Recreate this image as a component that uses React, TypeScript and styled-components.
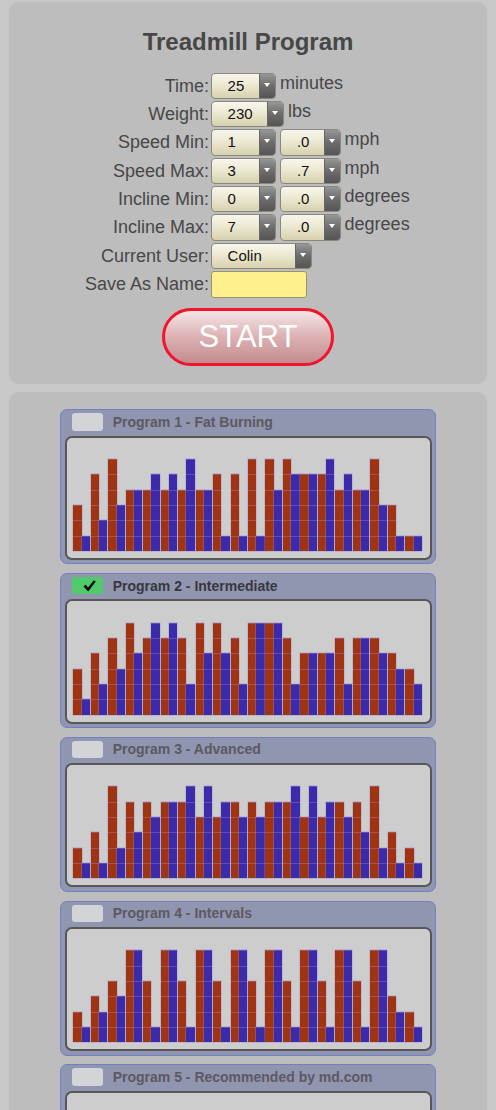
import React from 'react';
import styled, { createGlobalStyle } from 'styled-components';

const GlobalStyle = createGlobalStyle`
  html, body {
    margin: 0;
    padding: 0;
    background: #c8c8c8;
  }
  body {
    font-family: "Liberation Sans", Arial, Helvetica, sans-serif;
  }
`;

const Page = styled.div`
  display: flex;
  flex-direction: column;
  gap: 8px;
  padding: 2px 9px 0;
`;

const Panel = styled.section`
  background: #bdbdbd;
  border-radius: 10px;
`;

const SetupPanel = styled(Panel)`
  display: flex;
  flex-direction: column;
  padding: 26px 0 18.3px;
`;

const Title = styled.h1`
  margin: 0;
  font-size: 24px;
  line-height: 28px;
  font-weight: bold;
  color: #474747;
  text-align: center;
`;

const Form = styled.div`
  display: grid;
  grid-template-columns: 200px 1fr;
  grid-auto-rows: 26.33px;
  column-gap: 1.6px;
  row-gap: 2px;
  margin-top: 16.6px;
`;

const Label = styled.label`
  font-size: 18px;
  line-height: 26.33px;
  color: #474747;
  text-align: right;
  white-space: nowrap;
`;

const Controls = styled.div`
  display: flex;
  align-items: flex-start;
  gap: 4px;
`;

const Unit = styled.span`
  font-size: 18px;
  line-height: 20px;
  color: #474747;
`;

const SelectBox = styled.div<{ $w: number }>`
  width: ${(p) => p.$w}px;
  height: 26.33px;
  box-sizing: border-box;
  display: flex;
  border: 1px solid #8a887c;
  border-radius: 4px;
  overflow: hidden;
  background: linear-gradient(#f8f6ec, #ebe7cf 50%, #d6d1ae);
`;

const SelectValue = styled.span`
  flex: 1;
  padding-left: 16px;
  font-size: 15px;
  line-height: 24.33px;
  color: #111;
`;

const SelectArrow = styled.span`
  width: 16px;
  box-sizing: border-box;
  display: flex;
  justify-content: center;
  padding-top: 9px;
  border-left: 1px solid #666;
  background: linear-gradient(#969696, #6c6c6c 50%, #555);

  &::after {
    content: '';
    width: 0;
    height: 0;
    border-left: 3px solid transparent;
    border-right: 3px solid transparent;
    border-top: 4px solid #fff;
  }
`;

const TextInput = styled.input`
  width: 96px;
  height: 27px;
  box-sizing: border-box;
  padding: 0 4px;
  border: 1px solid #9a9468;
  border-radius: 3px;
  background: #fff08e;
  font: 15px "Liberation Sans", Arial, sans-serif;
  outline: none;
`;

const StartButton = styled.button`
  align-self: center;
  width: 172.6px;
  height: 57.4px;
  margin-top: 11px;
  padding: 0;
  box-sizing: border-box;
  border: 3px solid #f2132c;
  border-radius: 29px;
  background: linear-gradient(#f4e6e7, #dcb1b3 50%, #c38c8e);
  color: #fff;
  font: 31px "Liberation Sans", Arial, sans-serif;
  cursor: pointer;
`;

const ProgramsPanel = styled(Panel)`
  display: flex;
  flex-direction: column;
  align-items: center;
  gap: 8.6px;
  padding: 17.3px 0 20px;
`;

const Card = styled.div`
  width: 376px;
  box-sizing: border-box;
  padding: 0 3.5px 3.5px;
  border: 1px solid #6f80c6;
  border-radius: 7px;
  background: #9095b0;
`;

const CardHeader = styled.div`
  display: flex;
  align-items: center;
  gap: 10px;
  height: 17.4px;
  margin: 3px 0 5px 7.8px;
`;

const CheckBox = styled.span<{ $on: boolean }>`
  width: 30.4px;
  height: 17.4px;
  box-sizing: border-box;
  display: flex;
  align-items: center;
  justify-content: center;
  padding-left: 4px;
  border-radius: 3px;
  background: ${(p) => (p.$on ? '#4fcb6c' : '#d3d4d8')};
`;

const CardTitle = styled.span<{ $on: boolean }>`
  font-size: 14px;
  font-weight: bold;
  color: ${(p) => (p.$on ? '#38383e' : '#5c5962')};
  white-space: nowrap;
`;

const Chart = styled.div`
  height: 124.3px;
  box-sizing: border-box;
  display: flex;
  align-items: flex-end;
  gap: 0.85px;
  padding: 0 7.8px 7px 6.8px;
  border: 2px solid #575757;
  border-radius: 7px;
  background: #cdcdcd;
`;

const Pair = styled.div`
  flex: 1;
  display: flex;
  align-items: flex-end;
`;

const Bar = styled.div`
  flex: 1;
  display: flex;
  flex-direction: column;
  box-shadow: 0 0 0 0.6px rgba(150, 140, 210, 0.55);
`;

const Cell = styled.div<{ $kind: 'speed' | 'incline' }>`
  height: 15.33px;
  box-sizing: border-box;
  border-top: 1px solid rgba(190, 170, 230, 0.28);
  background: ${(p) => (p.$kind === 'speed' ? '#a03311' : '#3b2aa9')};
`;

type Level = [number, number];

const programs: { name: string; checked: boolean; data: Level[] }[] = [
  {
    name: 'Program 1 - Fat Burning',
    checked: false,
    data: [[3,1],[5,2],[6,3],[4,4],[4,5],[4,5],[4,6],[4,4],[5,1],[5,1],[6,1],[6,4],[6,5],[5,5],[5,6],[4,5],[4,4],[6,3],[3,1],[1,1]],
  },
  {
    name: 'Program 2 - Intermediate',
    checked: true,
    data: [[3,1],[4,2],[5,3],[6,4],[5,6],[5,6],[5,2],[6,4],[6,4],[5,2],[6,6],[6,6],[5,2],[4,4],[4,4],[5,2],[5,5],[5,4],[4,3],[3,2]],
  },
  {
    name: 'Program 3 - Advanced',
    checked: false,
    data: [[2,1],[3,1],[6,2],[5,3],[5,4],[5,5],[5,6],[4,6],[4,5],[5,4],[5,4],[5,5],[5,6],[4,6],[4,5],[5,4],[5,3],[6,2],[3,1],[2,1]],
  },
  {
    name: 'Program 4 - Intervals',
    checked: false,
    data: [[2,1],[3,2],[4,3],[6,6],[4,1],[6,6],[4,1],[6,6],[4,1],[6,6],[4,1],[6,6],[4,1],[6,6],[4,1],[6,6],[4,1],[6,6],[3,2],[2,1]],
  },
  {
    name: 'Program 5 - Recommended by md.com',
    checked: false,
    data: [[2,1],[3,1],[3,2],[4,2],[4,3],[5,3],[5,3],[5,4],[5,4],[5,4],[5,4],[5,4],[5,4],[5,3],[5,3],[4,3],[4,2],[3,2],[3,1],[2,1]],
  },
];

const Select: React.FC<{ w: number; value: string }> = ({ w, value }) => (
  <SelectBox $w={w}>
    <SelectValue>{value}</SelectValue>
    <SelectArrow />
  </SelectBox>
);

const Check = () => (
  <svg width="13" height="12" viewBox="0 0 13 12">
    <polygon points="0.5,6.5 2.6,4.6 5,7.4 10.8,0.3 12.8,1.6 5.2,11.4" fill="#0b0b0b" />
  </svg>
);

const BarStack: React.FC<{ level: number; kind: 'speed' | 'incline' }> = ({ level, kind }) => (
  <Bar>
    {Array.from({ length: level }, (_, i) => (
      <Cell key={i} $kind={kind} />
    ))}
  </Bar>
);

export default function App() {
  return (
    <>
      <GlobalStyle />
      <Page>
        <SetupPanel>
          <Title>Treadmill Program</Title>
          <Form>
            <Label>Time:</Label>
            <Controls>
              <Select w={65.3} value="25" />
              <Unit>minutes</Unit>
            </Controls>

            <Label>Weight:</Label>
            <Controls>
              <Select w={73.3} value="230" />
              <Unit>lbs</Unit>
            </Controls>

            <Label>Speed Min:</Label>
            <Controls>
              <Select w={65.3} value="1" />
              <Select w={60.7} value=".0" />
              <Unit>mph</Unit>
            </Controls>

            <Label>Speed Max:</Label>
            <Controls>
              <Select w={65.3} value="3" />
              <Select w={60.7} value=".7" />
              <Unit>mph</Unit>
            </Controls>

            <Label>Incline Min:</Label>
            <Controls>
              <Select w={65.3} value="0" />
              <Select w={60.7} value=".0" />
              <Unit>degrees</Unit>
            </Controls>

            <Label>Incline Max:</Label>
            <Controls>
              <Select w={65.3} value="7" />
              <Select w={60.7} value=".0" />
              <Unit>degrees</Unit>
            </Controls>

            <Label>Current User:</Label>
            <Controls>
              <Select w={101} value="Colin" />
            </Controls>

            <Label>Save As Name:</Label>
            <Controls>
              <TextInput type="text" />
            </Controls>
          </Form>
          <StartButton>START</StartButton>
        </SetupPanel>

        <ProgramsPanel>
          {programs.map((prog) => (
            <Card key={prog.name}>
              <CardHeader>
                <CheckBox $on={prog.checked}>{prog.checked && <Check />}</CheckBox>
                <CardTitle $on={prog.checked}>{prog.name}</CardTitle>
              </CardHeader>
              <Chart>
                {prog.data.map(([speed, incline], i) => (
                  <Pair key={i}>
                    <BarStack level={speed} kind="speed" />
                    <BarStack level={incline} kind="incline" />
                  </Pair>
                ))}
              </Chart>
            </Card>
          ))}
        </ProgramsPanel>
      </Page>
    </>
  );
}
